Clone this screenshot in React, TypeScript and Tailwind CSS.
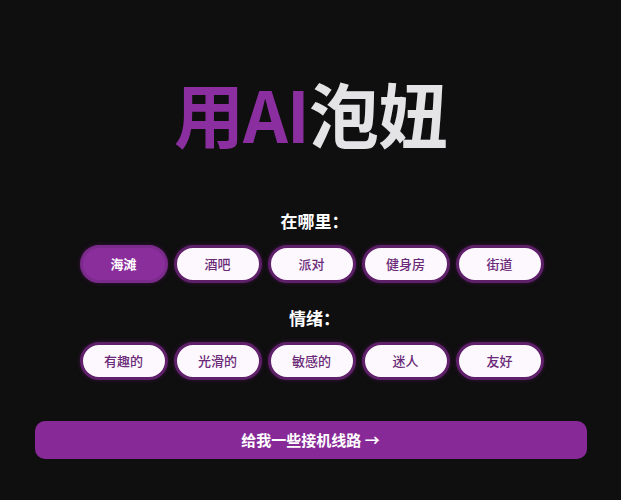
import React, { useState } from "react";

const places = ["海滩", "酒吧", "派对", "健身房", "街道"];
const moods = ["有趣的", "光滑的", "敏感的", "迷人", "友好"];

function Pill({ label, active, onClick }: { label: string; active: boolean; onClick: () => void }) {
  return (
    <button
      onClick={onClick}
      className={
        active
          ? "w-[88px] h-[38px] rounded-full bg-[#8a2e9c] border-[3px] border-[#7a2a8a] text-white text-[13px] font-bold flex items-center justify-center shadow-[0_0_4px_#3a1040]"
          : "w-[88px] h-[38px] rounded-full bg-[#fdf8fd] border-[3px] border-[#5e2169] text-[#6a2a78] text-[13px] font-medium flex items-center justify-center shadow-[0_0_4px_#3a1040]"
      }
    >
      {label}
    </button>
  );
}

export default function App() {
  const [place, setPlace] = useState(0);
  const [mood, setMood] = useState(-1);
  return (
    <div
      className="min-h-[500px] w-full bg-[#0f0f0f] flex flex-col items-center"
      style={{ fontFamily: '"Noto Sans CJK SC", "Noto Sans", sans-serif' }}
    >
      <h1 className="mt-[78px] text-[70px] leading-none font-bold tracking-[-1px]">
        <span className="text-[#8b2fa0]">用AI</span>
        <span className="text-[#e4e4e7]">泡妞</span>
      </h1>
      <div className="mt-[64px] text-white text-[17px] font-bold leading-none pl-[8px]">在哪里：</div>
      <div className="mt-[16px] flex gap-[6px] pl-[2px]">
        {places.map((p, i) => (
          <Pill key={p} label={p} active={place === i} onClick={() => setPlace(i)} />
        ))}
      </div>
      <div className="mt-[26px] text-white text-[17px] font-bold leading-none pl-[8px]">情绪：</div>
      <div className="mt-[16px] flex gap-[6px] pl-[2px]">
        {moods.map((m, i) => (
          <Pill key={m} label={m} active={mood === i} onClick={() => setMood(i)} />
        ))}
      </div>
      <button className="mt-[41px] w-[552px] h-[38px] rounded-[10px] bg-[#872a98] text-white text-[15px] font-bold flex items-center justify-center">
        给我一些接机线路 →
      </button>
    </div>
  );
}
